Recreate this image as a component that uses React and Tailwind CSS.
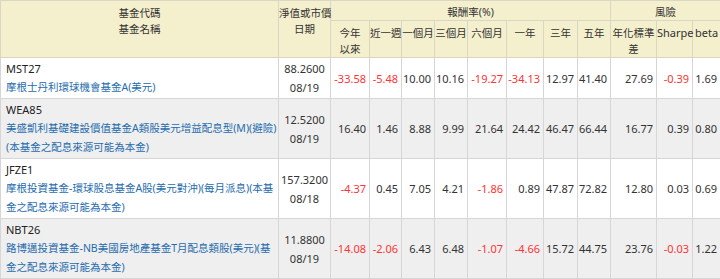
const funds = [
  {
    code: 'MST27',
    name: ['摩根士丹利環球機會基金A(美元)'],
    nav: '88.2600',
    date: '08/19',
    ret: ['-33.58', '-5.48', '10.00', '10.16', '-19.27', '-34.13', '12.97', '41.40'],
    risk: ['27.69', '-0.39', '1.69'],
  },
  {
    code: 'WEA85',
    name: ['美盛凱利基礎建設價值基金A類股美元增益配息型(M)(避險)', '(本基金之配息來源可能為本金)'],
    nav: '12.5200',
    date: '08/19',
    ret: ['16.40', '1.46', '8.88', '9.99', '21.64', '24.42', '46.47', '66.44'],
    risk: ['16.77', '0.39', '0.80'],
  },
  {
    code: 'JFZE1',
    name: ['摩根投資基金-環球股息基金A股(美元對沖)(每月派息)(本基', '金之配息來源可能為本金)'],
    nav: '157.3200',
    date: '08/18',
    ret: ['-4.37', '0.45', '7.05', '4.21', '-1.86', '0.89', '47.87', '72.82'],
    risk: ['12.80', '0.03', '0.69'],
  },
  {
    code: 'NBT26',
    name: ['路博邁投資基金-NB美國房地產基金T月配息類股(美元)(基', '金之配息來源可能為本金)'],
    nav: '11.8800',
    date: '08/19',
    ret: ['-14.08', '-2.06', '6.43', '6.48', '-1.07', '-4.66', '15.72', '44.75'],
    risk: ['23.76', '-0.03', '1.22'],
  },
];

const widths = [278, 52, 39, 32, 33, 33, 39, 37, 34, 33, 46, 36, 28];

const subHeads = [
  ['今年', '以來'],
  ['近一週'],
  ['一個月'],
  ['三個月'],
  ['六個月'],
  ['一年'],
  ['三年'],
  ['五年'],
  ['年化標準', '差'],
  ['Sharpe'],
  ['beta'],
];

const th = 'border border-[#d9d6c4] bg-[#f4efcd] font-normal text-[#333] text-center align-top whitespace-nowrap overflow-visible';
const td = 'border border-[#d6d6d6] align-middle';

function Num({ v }) {
  const neg = v.startsWith('-');
  return (
    <td className={`${td} text-right pr-[3px] pl-0 whitespace-nowrap leading-[19px] ${neg ? 'text-[#ff3333]' : 'text-[#333]'}`}>
      {v}
    </td>
  );
}

export default function App() {
  return (
    <div
      className="w-[720px] bg-white text-[11px]"
      style={{ fontFamily: '"Noto Sans", "Noto Sans CJK TC", sans-serif' }}
    >
      <table className="table-fixed border-collapse w-[720px]">
        <colgroup>
          {widths.map((w, i) => (
            <col key={i} style={{ width: w }} />
          ))}
        </colgroup>
        <thead>
          <tr className="h-[20px]">
            <th rowSpan={2} className={`${th} pt-[4px] leading-[16px] text-[10.5px]`}>
              基金代碼
              <br />
              基金名稱
            </th>
            <th rowSpan={2} className={`${th} pt-[4px] leading-[16px] text-[10.5px]`}>
              淨值或市價
              <br />
              日期
            </th>
            <th colSpan={8} className={`${th} pt-[4px] leading-[15px] text-[10.5px]`}>
              報酬率(%)
            </th>
            <th colSpan={3} className={`${th} pt-[4px] leading-[15px] text-[10.5px]`}>
              風險
            </th>
          </tr>
          <tr className="h-[36px]">
            {subHeads.map((lines, i) => (
              <th key={i} className={`${th} pt-[4px] leading-[16px] text-[10.5px] px-0`}>
                {lines.map((l, j) => (
                  <div key={j} className={/^[A-Za-z]/.test(l) ? 'text-[11px]' : ''}>
                    {l}
                  </div>
                ))}
              </th>
            ))}
          </tr>
        </thead>
        <tbody>
          {funds.map((f, i) => (
            <tr key={f.code} className={i % 2 ? 'bg-[#efefef]' : 'bg-white'}>
              <td className={`${td} align-top pl-[5px] pr-0 py-[1px] leading-[19px]`}>
                <div className="text-[#222]">{f.code}</div>
                {f.name.map((l, j) => (
                  <div key={j} className="text-[#1f6cae] text-[10.5px] whitespace-nowrap">
                    {l}
                  </div>
                ))}
              </td>
              <td className={`${td} text-center text-[#333] leading-[19px] px-0`}>
                <div>{f.nav}</div>
                <div>{f.date}</div>
              </td>
              {f.ret.map((v, j) => (
                <Num key={j} v={v} />
              ))}
              {f.risk.map((v, j) => (
                <Num key={'r' + j} v={v} />
              ))}
            </tr>
          ))}
        </tbody>
      </table>
    </div>
  );
}
